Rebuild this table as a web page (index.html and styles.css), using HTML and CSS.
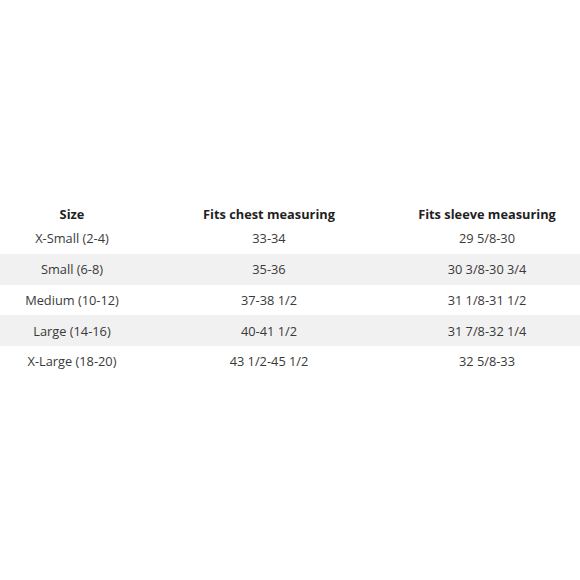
FILE: index.html
```html
<!DOCTYPE html>
<html>
<head>
<meta charset="utf-8">
<link rel="stylesheet" href="styles.css">
</head>
<body>
<div class="page">
<table class="sizes">
  <colgroup><col class="c1"><col class="c2"><col class="c3"></colgroup>
  <thead>
    <tr><th>Size</th><th>Fits chest measuring</th><th>Fits sleeve measuring</th></tr>
  </thead>
  <tbody>
    <tr><td>X-Small (2-4)</td><td>33-34</td><td>29 5/8-30</td></tr>
    <tr class="alt"><td>Small (6-8)</td><td>35-36</td><td>30 3/8-30 3/4</td></tr>
    <tr><td>Medium (10-12)</td><td>37-38 1/2</td><td>31 1/8-31 1/2</td></tr>
    <tr class="alt"><td>Large (14-16)</td><td>40-41 1/2</td><td>31 7/8-32 1/4</td></tr>
    <tr><td>X-Large (18-20)</td><td>43 1/2-45 1/2</td><td>32 5/8-33</td></tr>
  </tbody>
</table>
</div>
</body>
</html>
```
FILE: styles.css
```css
html, body { margin: 0; padding: 0; background: #fff; }
.page {
  width: 580px;
  height: 580px;
  padding-top: 200px;
  box-sizing: border-box;
}
.sizes {
  width: 580px;
  border-collapse: collapse;
  table-layout: fixed;
  font-family: "Open Sans", sans-serif;
  font-size: 12.8px;
  color: #3a3a3a;
}
.c1 { width: 144px; }
.c2 { width: 250px; }
.c3 { width: 186px; }
.sizes th {
  font-weight: 700;
  color: #1f1f1f;
  height: 17px;
  padding: 5px 0 0;
  text-align: center;
  vertical-align: middle;
}
.sizes td {
  height: 30.75px;
  padding: 0;
  text-align: center;
}
.sizes tr.alt td { background: #f1f1f1; }
```
